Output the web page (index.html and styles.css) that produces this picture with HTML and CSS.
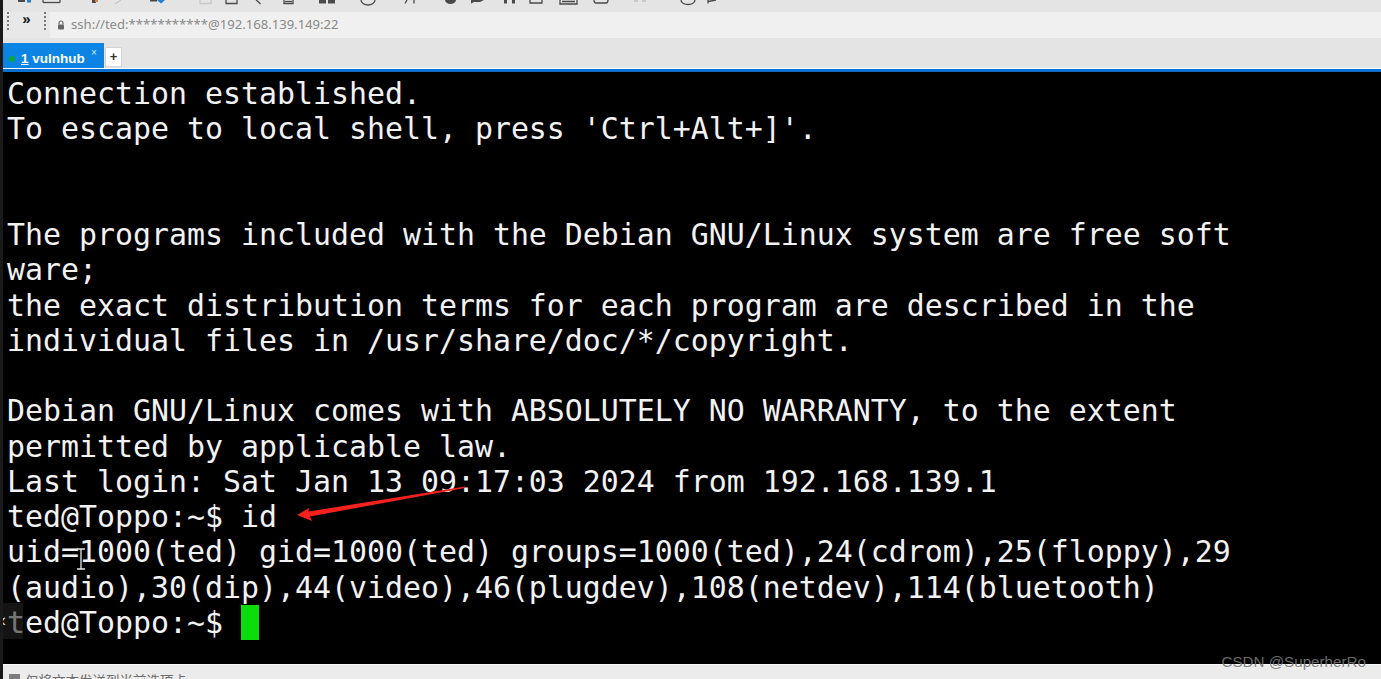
FILE: index.html
```html
<!DOCTYPE html>
<html lang="zh">
<head>
<meta charset="utf-8">
<title>vulnhub</title>
<link rel="stylesheet" href="styles.css">
</head>
<body>
<div class="app">
  <div class="toolbar">
    <svg class="strip" width="760" height="12" viewBox="0 0 760 12">
      <g class="ic-dark">
        <rect x="18" y="0" width="7" height="2"/>
        <path d="M43 2.500h17" class="line"/>
        <path d="M43 0v2.500M60 0v2.500" class="line"/>
        <rect x="92" y="0" width="4" height="3"/>
        <rect x="150" y="0" width="7" height="1.500"/>
        <path d="M226 0v3.500h11v-3.500" class="line"/>
        <path d="M256 0l2 1.500 2.500 2.500" class="line"/>
        <path d="M284 0v3.500h9v-3.500" class="line"/>
        <path d="M285 1.500h7" class="line"/>
        <rect x="319" y="0" width="7" height="3.500"/>
        <rect x="328" y="0" width="7" height="3.500"/>
        <path d="M361 0a7 5 0 0 0 14 0" class="line"/>
        <path d="M405 3.500l2-3.500M414 3.500v-3.500" class="line"/>
        <path d="M445 0a5.500 4 0 0 0 11 0z"/>
        <path d="M471 3.500l3-1.500h6l4-2h-13z"/>
        <rect x="504" y="0" width="3" height="3.500"/>
        <rect x="512" y="0" width="3" height="3.500"/>
        <path d="M530 0v3h12v-3" class="line"/>
        <path d="M560 0v4h17v-4M562 1.500h13" class="line"/>
        <path d="M594 0a2 3 0 0 0 2 3h10a2 3 0 0 0 2-3" class="line"/>
        <path d="M681 0a7 4.500 0 0 0 14 0" class="line"/>
        <path d="M708 3.500v-3.500M708 1.500l8-1.500" class="line"/>
      </g>
      <g class="ic-soft">
        <path d="M115 4l6-4" class="line"/>
        <path d="M200 0v3.500h11v-3.500" class="line"/>
        <rect x="634" y="0" width="4" height="2"/>
        <rect x="642" y="0" width="4" height="2"/>
      </g>
      <rect class="ic-blue" x="27" y="0" width="4" height="2.500"/>
      <path class="ic-blue" d="M157 0h8l-4 3.500z"/>
      <rect class="ic-orange" x="95" y="0" width="3" height="2"/>
    </svg>
  </div>
  <div class="addr-row">
    <div class="addr-side">
      <span class="grip"></span>
      <span class="chev">»</span>
      <span class="grip"></span>
    </div>
    <div class="addr-field">
      <svg class="lock" width="8" height="10" viewBox="0 0 8 10">
        <path class="lock-bow" d="M2 4.500V3a2 2 0 0 1 4 0v1.500"/>
        <rect class="lock-box" x="1" y="4.500" width="6" height="5" rx="1"/>
      </svg>
      <span class="addr-text">ssh://ted:***********@192.168.139.149:22</span>
    </div>
  </div>
  <div class="tabbar">
    <div class="tab">
      <span class="dot"></span>
      <span class="tab-label"><u>1</u> vulnhub</span>
      <span class="tab-x">×</span>
    </div>
    <div class="tab-add">+</div>
  </div>
  <div class="terminal">
<pre class="output">Connection established.
To escape to local shell, press 'Ctrl+Alt+]'.


The programs included with the Debian GNU/Linux system are free soft
ware;
the exact distribution terms for each program are described in the
individual files in /usr/share/doc/*/copyright.

Debian GNU/Linux comes with ABSOLUTELY NO WARRANTY, to the extent
permitted by applicable law.
Last login: Sat Jan 13 09:17:03 2024 from 192.168.139.1
ted@Toppo:~$ id
uid=1000(ted) gid=1000(ted) groups=1000(ted),24(cdrom),25(floppy),29
(audio),30(dip),44(video),46(plugdev),108(netdev),114(bluetooth)
ted@Toppo:~$ <span class="cursor"> </span></pre>
    <svg class="arrow" width="180" height="40" viewBox="0 0 180 40">
      <path class="arrow-fill" d="M2 30L14 23 13.500 26.500 170 1.500 170 3 15 31.500 17 36z"/>
    </svg>
    <svg class="ibeam" width="10" height="22" viewBox="0 0 10 22">
      <path class="ibeam-line" d="M1 1h8M5 1v20M1 21h8"/>
    </svg>
    <div class="side-handle">‹</div>
  </div>
  <div class="status">
    <span class="status-icon"></span>
    <span class="status-text">仅将文本发送到当前选项卡</span>
  </div>
  <div class="watermark">CSDN @SuperherRo</div>
</div>
</body>
</html>
```

FILE: styles.css
```css
* { box-sizing: border-box; }
html, body { margin: 0; padding: 0; background: #000; }
.app {
  position: relative;
  width: 1381px;
  height: 679px;
  display: flex;
  flex-direction: column;
  overflow: hidden;
  border-left: 3px solid #1a1a1a;
  background: #e4e4e4;
  font-family: "Liberation Sans", Arial, sans-serif;
}
.toolbar { height: 12px; flex: none; background: #e4e4e4; }
.strip { display: block; margin-left: -3px; }
.line { fill: none; stroke: currentColor; stroke-width: 1.3; }
.ic-dark { color: #4a4a4a; fill: #4a4a4a; }
.ic-soft { color: #c8c8c8; fill: #c8c8c8; }
.ic-blue { fill: #1f7fd0; }
.ic-orange { fill: #d08a50; }

.addr-row { height: 26px; flex: none; display: flex; background: #e8e8e8; }
.addr-side { width: 47px; flex: none; display: flex; align-items: flex-start; padding: 0 0 0 4px; }
.grip { width: 2px; height: 18px; border-left: 2px dotted #777; flex: none; }
.chev { width: 35px; flex: none; text-align: center; font-size: 15px; font-weight: 700; line-height: 13px; color: #111; }
.addr-field { flex: 1; display: flex; align-items: center; gap: 6px; padding: 0 0 3px 7px; background: #f0f0f0; }
.lock { flex: none; margin-top: 2px; }
.lock-bow { fill: none; stroke: #666; stroke-width: 1.2; }
.lock-box { fill: #666; }
.addr-text { font-family: "Noto Sans", sans-serif; font-size: 13.100px; color: #8a8a8a; white-space: nowrap; }

.tabbar { height: 31px; flex: none; display: flex; align-items: flex-start; padding-top: 5px; background: #e4e4e4; }
.tab { width: 101px; height: 26px; flex: none; display: flex; align-items: center; background: #0b84e4; padding: 5px 0 0 6px; color: #fff; position: relative; }
.dot { width: 6px; height: 6px; border-radius: 50%; background: #0aa83c; flex: none; margin-right: 6px; }
.tab-label { font-size: 13.500px; font-weight: 700; white-space: nowrap; }
.tab-x { position: absolute; left: 88px; top: 4px; font-size: 10px; color: #d5e8f8; line-height: 12px; }
.tab-add { width: 17px; height: 20px; margin: 4px 0 0 1px; background: #fff; border: 1px solid #d4d4d4; text-align: center; font-size: 13px; font-weight: 700; line-height: 17px; color: #333; flex: none; }

.terminal {
  flex: 1;
  min-height: 0;
  position: relative;
  background: #000;
  border-top: 3px solid #0b6fd0;
  box-shadow: 0 -1px 0 #fff;
}
.output {
  margin: 0;
  padding: 4px 0 0 4px;
  font-family: "DejaVu Sans Mono", monospace;
  font-size: 29.9px;
  line-height: 35.27px;
  color: #f2f2f2;
}
.cursor { background: #0bdc0b; }
.arrow { position: absolute; left: 292px; top: 413px; }
.arrow-fill { fill: #f5211c; }
.ibeam { position: absolute; left: 73px; top: 476px; }
.ibeam-line { fill: none; stroke: #e8e8e8; stroke-width: 1.3; }
.side-handle {
  position: absolute;
  left: -3px;
  top: 531px;
  width: 23px;
  height: 36px;
  background: rgba(34, 34, 34, 0.6);
  color: #ddd;
  font-size: 18px;
  line-height: 34px;
}

.status { height: 15px; flex: none; display: flex; align-items: flex-start; gap: 5px; padding: 7px 0 0 6px; background: #ececec; border-top: 1px solid #fafafa; overflow: hidden; }
.status-icon { width: 11px; height: 11px; flex: none; margin-top: 2px; background: #7d7d7d; }
.status-text { font-family: "Noto Sans CJK SC", sans-serif; font-size: 13.5px; line-height: 16px; color: #6e6e6e; white-space: nowrap; }

.watermark {
  position: absolute;
  right: 15px;
  top: 653px;
  font-family: "Liberation Sans", Arial, sans-serif;
  font-size: 15.200px;
  line-height: 18px;
  color: rgba(120, 120, 120, 0.9);
  white-space: nowrap;
}
```
